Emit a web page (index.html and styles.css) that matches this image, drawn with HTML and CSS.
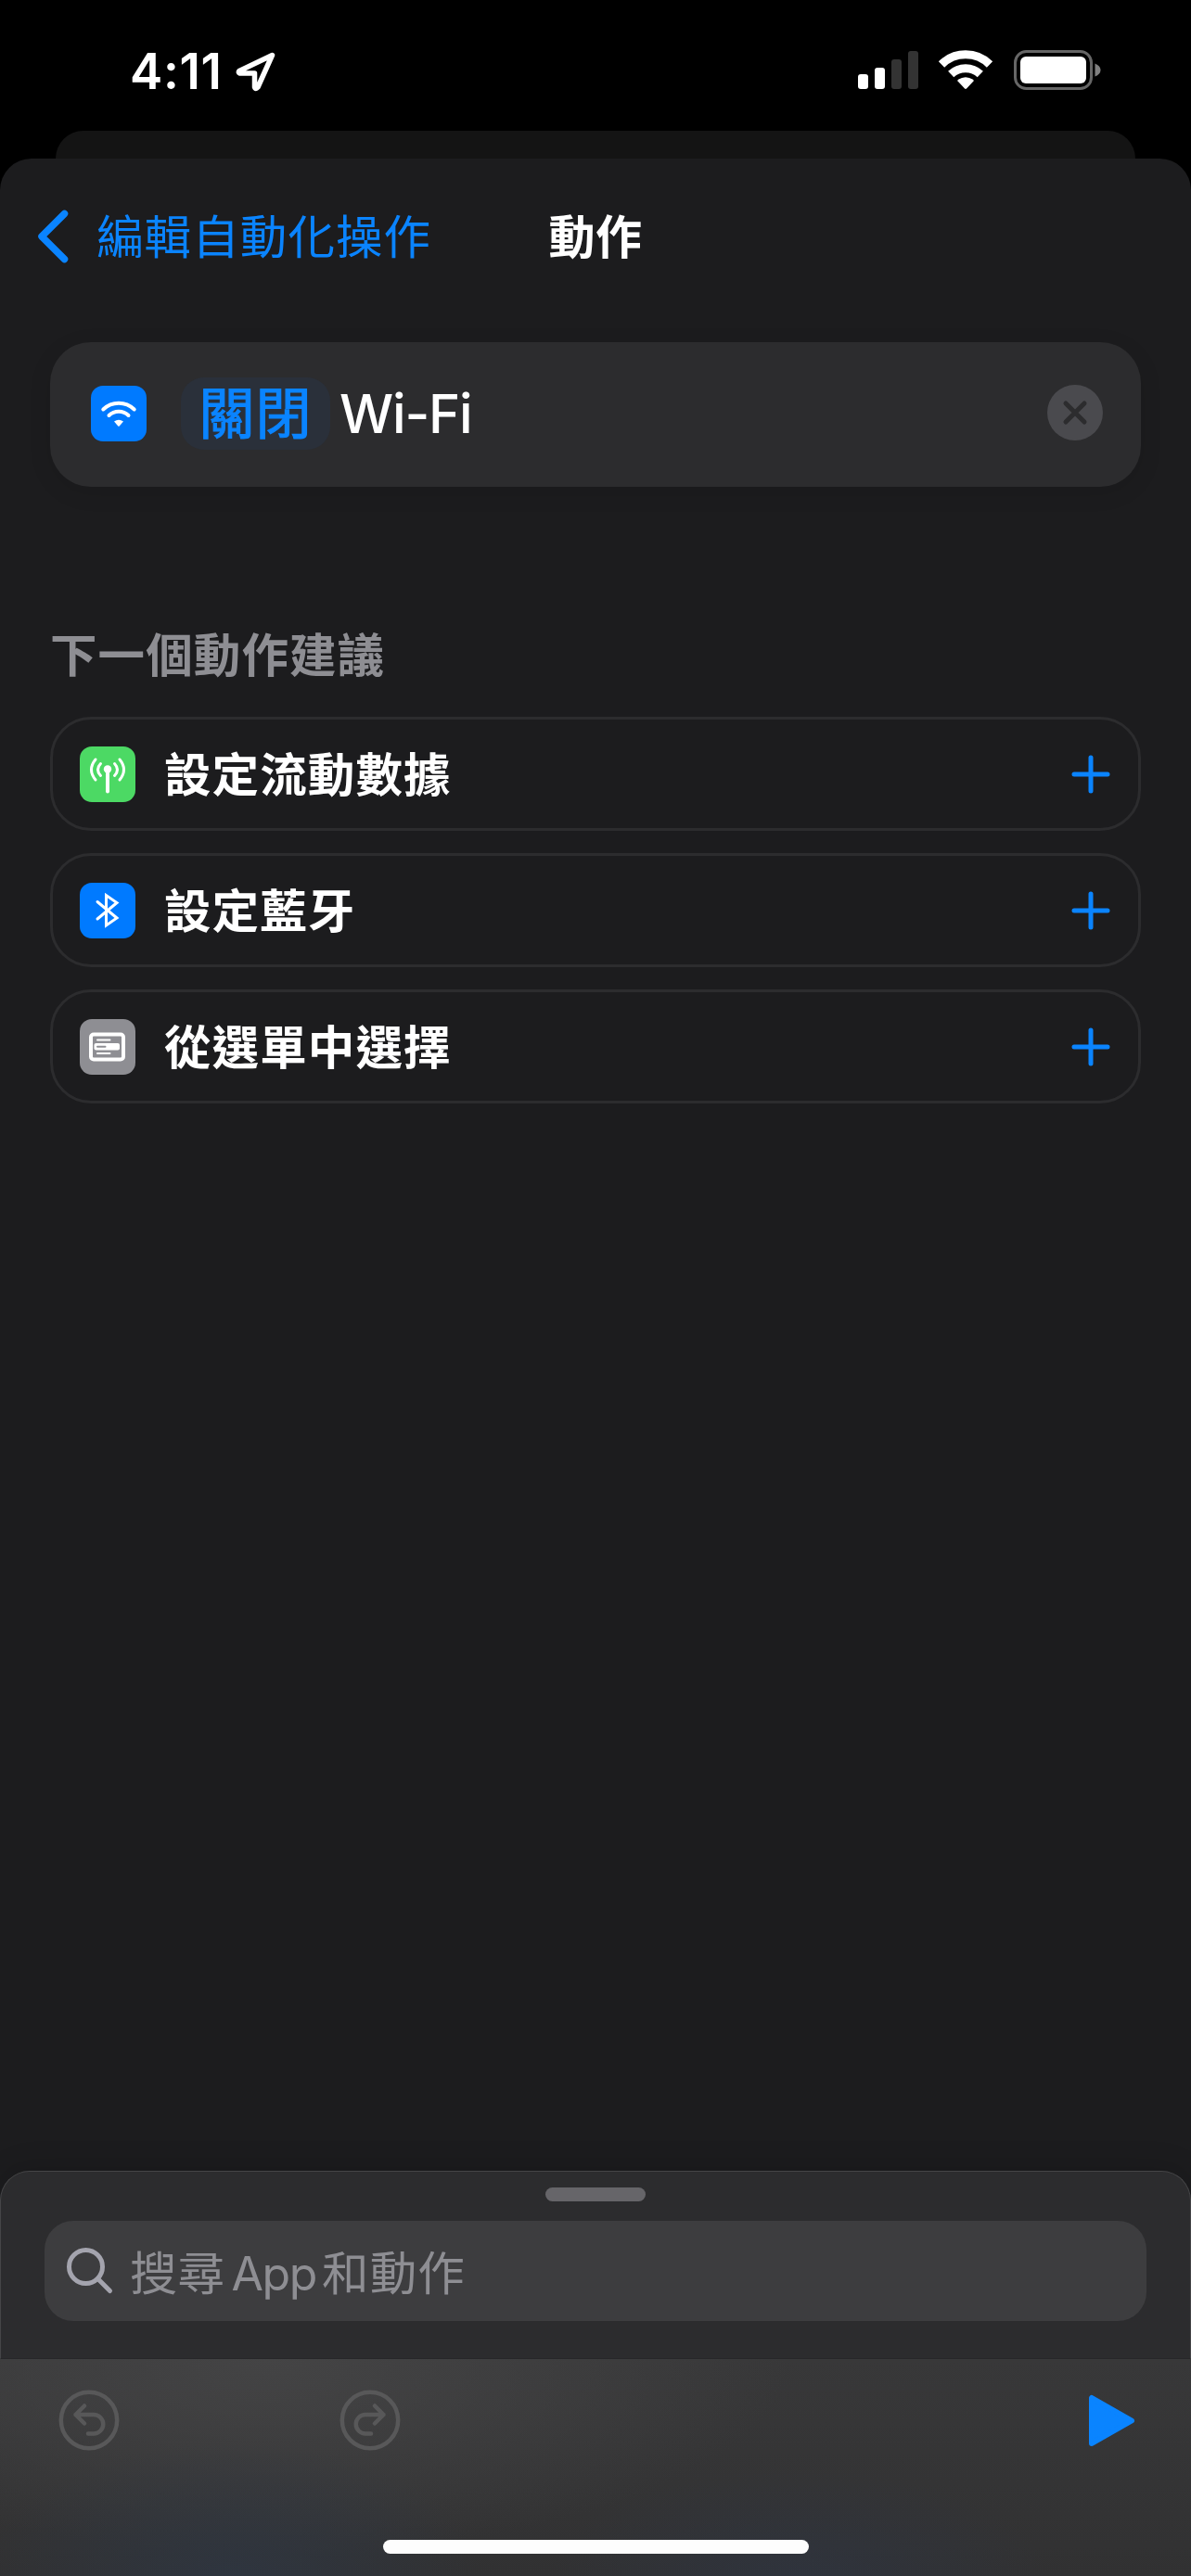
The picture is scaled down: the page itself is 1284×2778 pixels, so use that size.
FILE: index.html
```html
<!DOCTYPE html>
<html lang="zh-Hant-HK">
<head>
<meta charset="utf-8">
<title>動作</title>
<link rel="stylesheet" href="styles.css">
</head>
<body>
<div class="phone">
  <header class="status">
    <div class="status-left">
      <span class="time">4:11</span>
      <svg class="location" viewBox="0 0 42 42"><path d="M38.5 3.5 3 20.500q-1.500 1.500.500 2.500H19.500V38q1 3 3.500 0Z"/></svg>
    </div>
    <div class="status-right">
      <svg class="signal" viewBox="0 0 65 41"><rect y="25" width="11" height="16" rx="3"/><rect x="18" y="18" width="11" height="23" rx="3"/><rect class="dim" x="36" y="9" width="11" height="32" rx="3"/><rect class="dim" x="54" width="11" height="41" rx="3"/></svg>
      <svg class="wifi" viewBox="0 0 58 42"><path d="M3 15.500A37 37 0 0 1 55 15.500" class="arc"/><path d="M13.200 26A23 23 0 0 1 44.800 26" class="arc"/><path d="M20.500 33.500Q20 32.500 21 31.800 29 26.500 37 31.800 38 32.500 37.500 33.500L30 41.500Q29 42.300 28 41.500Z"/></svg>
      <svg class="battery" viewBox="0 0 94 43"><rect class="shell" x="1.500" y="1.500" width="82" height="40" rx="12"/><rect x="7" y="7" width="71" height="29" rx="6"/><path class="nub" d="M87.500 14.500Q93.500 17 93.500 21.500T87.500 28.500Z"/></svg>
    </div>
  </header>
  <div class="sheet-behind"></div>
  <main class="sheet">
    <nav class="nav">
      <a class="back"><svg viewBox="0 0 34 58"><path d="M29.500 4.500 5 29 29.500 53.500"/></svg><span>編輯自動化操作</span></a>
      <h1>動作</h1>
    </nav>
    <section class="action">
      <svg class="tile blue" viewBox="0 0 60 60"><path class="s4" d="M13.300 25.500A24 24 0 0 1 46.700 25.500M19.500 32A15.200 15.200 0 0 1 40.500 32"/><path class="fill" d="M25 38.600Q30 34.800 35 38.600L30.700 43.500Q30 44 29.300 43.500Z"/></svg>
      <span class="pill">關閉</span>
      <span class="object">Wi-Fi</span>
      <svg class="close" viewBox="0 0 60 60"><circle cx="30" cy="30" r="30"/><path d="M20 20 40 40M40 20 20 40"/></svg>
    </section>
    <section class="suggestions">
      <h2>下一個動作建議</h2>
      <ul>
        <li>
          <svg class="tile green" viewBox="0 0 60 60"><path class="s3" d="M17 14Q8 25 17 36M22.500 18.500Q16.500 25 22.500 31.500M37.500 18.500Q43.500 25 37.500 31.500M43 14Q52 25 43 36"/><path class="s4" d="M30 25V48.500"/><circle class="fill" cx="30" cy="24.500" r="4.200"/></svg>
          <span>設定流動數據</span>
          <svg class="plus" viewBox="0 0 42 42"><path d="M21 3V39M3 21H39"/></svg>
        </li>
        <li>
          <svg class="tile blue" viewBox="0 0 60 60"><path class="s3 sharp" d="M19 20.500 40 38 28.500 46V13.500L40 21.500 19 39"/></svg>
          <span>設定藍牙</span>
          <svg class="plus" viewBox="0 0 42 42"><path d="M21 3V39M3 21H39"/></svg>
        </li>
        <li>
          <svg class="tile gray" viewBox="0 0 60 60"><rect class="s4" x="12" y="16.500" width="35" height="27" rx="3"/><rect class="fill" x="15.500" y="26" width="27.500" height="7.500" rx="2"/><path class="s2" d="M19 22.500H32.500M19 37H32.500"/><path class="s2 cut" d="M19 29.800H27.500"/></svg>
          <span>從選單中選擇</span>
          <svg class="plus" viewBox="0 0 42 42"><path d="M21 3V39M3 21H39"/></svg>
        </li>
      </ul>
    </section>
  </main>
  <section class="drawer">
    <div class="grabber"></div>
    <div class="search">
      <svg viewBox="0 0 50 50"><circle cx="20.500" cy="20.500" r="18"/><path d="M33.500 33.500 46.500 46.500"/></svg>
      <span>搜尋 <b>App</b> 和動作</span>
    </div>
  </section>
  <footer class="toolbar">
    <div class="tools">
      <svg class="round" viewBox="0 0 66 66"><circle cx="33" cy="33" r="30.200"/><path d="M28 17.500 18.500 27 28 36.500M18.500 27H38A10 10 0 0 1 38 47.500H32"/></svg>
      <svg class="round" viewBox="0 0 66 66"><circle cx="33" cy="33" r="30.200"/><path d="M38 17.500 47.500 27 38 36.500M47.500 27H28A10 10 0 0 0 28 47.500H34"/></svg>
      <svg class="play" viewBox="0 0 49 55"><path d="M3 3V52L46 27.500Z"/></svg>
    </div>
    <div class="home"></div>
  </footer>
</div>
</body>
</html>
```

FILE: styles.css
```css
* { box-sizing: border-box; }
body { margin: 0; background: #000; }
h1, h2, ul { margin: 0; padding: 0; list-style: none; }
svg { display: block; flex: none; overflow: visible; }

.phone {
  width: 1284px;
  height: 2778px;
  display: flex;
  flex-direction: column;
  overflow: hidden;
  background: #000;
  color: #fff;
  font-family: Inter, "Noto Sans CJK TC", sans-serif;
  font-size: 50.5px;
  letter-spacing: 1.1px;
}

.status {
  height: 141px;
  padding: 54px 97px 0 140px;
  display: flex;
  justify-content: space-between;
  fill: #fff;
}
.status-left { display: flex; gap: 18px; }
.time { font-size: 53px; font-weight: 600; line-height: 46px; letter-spacing: 0.6px; width: 97px; white-space: nowrap; }
.location { width: 42px; height: 42px; margin-top: 2px; fill: none; stroke: #fff; stroke-width: 5.5; stroke-linejoin: round; }
.status-right { display: flex; }
.signal { width: 65px; height: 41px; margin: 1px 22px 0 0; }
.dim { fill: #333; }
.wifi { width: 58px; height: 42px; margin-right: 23px; }
.arc { fill: none; stroke: #fff; stroke-width: 9; }
.battery { width: 94px; height: 43px; }
.shell { fill: none; stroke: #666; stroke-width: 3; }
.nub { fill: #808080; }

.sheet-behind { height: 30px; margin: 0 60px; border-radius: 30px 30px 0 0; background: #141414; flex: none; }
.sheet { flex: 1; border-radius: 34px 34px 0 0; background: #1c1c1e; }

.nav {
  height: 168px;
  padding: 0 40px;
  display: grid;
  grid-template-columns: 1fr auto 1fr;
  align-items: center;
  line-height: 74px;
}
.back { display: flex; align-items: center; gap: 30px; color: #0a84ff; white-space: nowrap; }
.back svg { width: 34px; height: 58px; fill: none; stroke: #0a84ff; stroke-width: 7.5; stroke-linecap: round; stroke-linejoin: round; }
.back span, h1 { padding-top: 1px; }
h1 { font-size: 50px; font-weight: 600; letter-spacing: 0.5px; }

.action {
  height: 156px;
  margin: 30px 54px 0;
  padding: 0 41px 2px 44px;
  display: flex;
  align-items: center;
  border-radius: 44px;
  background: #2c2c2e;
  box-shadow: 0 6px 24px rgba(0, 0, 0, .1);
  font-size: 60px;
}
.tile { width: 60px; height: 60px; border-radius: 13px; fill: none; stroke: #fff; stroke-linecap: round; stroke-linejoin: round; }
.blue { background: #007aff; }
.green { background: #4cd964; }
.gray { background: #8e8e93; }
.fill { fill: #fff; stroke: none; }
.s2 { stroke-width: 2; }
.s3 { stroke-width: 3; }
.s4 { stroke-width: 4; }
.sharp { stroke-linejoin: miter; }
.cut { stroke: #8e8e93; }
.pill { margin-left: 37px; width: 161px; height: 78px; line-height: 78px; text-align: center; border-radius: 25px; background: #2a303a; color: #0a84ff; -webkit-text-stroke: 1.2px #0a84ff; }
.object { margin-left: 10px; font-size: 58px; font-weight: 500; letter-spacing: -1.2px; }
.close { width: 60px; height: 60px; margin: -2px 0 0 auto; stroke: #2c2c2e; stroke-width: 5; stroke-linecap: round; }
.close circle { fill: #4a4a4e; stroke: none; }

.suggestions { margin: 145px 54px 0; }
h2 { height: 103px; font-size: 50.5px; font-weight: 600; line-height: 74px; color: #8e8e93; }
ul { display: grid; gap: 24px; }
li { height: 123px; padding: 0 30px 0 29px; display: flex; align-items: center; border: 3px solid #2c2c2e; border-radius: 44px; font-weight: 600; }
li span { margin-left: 31px; padding-bottom: 5px; flex: 1; }
.plus { width: 42px; height: 42px; stroke: #0a84ff; stroke-width: 5; stroke-linecap: round; }

/* The drawer's rounded corners sit over the end of the sheet. */
.drawer { position: relative; height: 203px; margin-top: -40px; padding: 17px 47px 0; border: 1px solid #454547; border-bottom-color: #262628; border-radius: 32px 32px 0 0; background: #2c2c2e; box-shadow: 0 -4px 30px rgba(0, 0, 0, .15); }
.sheet { margin-bottom: 0; }
.drawer, .toolbar { flex: none; }
.grabber { width: 108px; height: 15px; margin: 0 auto 21px; border-radius: 7.5px; background: #666569; }
.search { height: 108px; padding-left: 24px; display: flex; align-items: center; gap: 18px; border-radius: 31px; background: #3d3d3f; color: #8e8e93; }
.search svg { width: 50px; height: 50px; fill: none; stroke: #a4a4ae; stroke-width: 5; stroke-linecap: round; }
.search b { font-size: 50px; font-weight: 400; letter-spacing: -1.5px; }
.search span { padding-bottom: 3px; word-spacing: -9px; }

.toolbar {
  position: relative;
  height: 234px;
  background:
    radial-gradient(ellipse 270px 150px at 250px 240px, rgba(46, 54, 66, .85), transparent),
    radial-gradient(ellipse 270px 120px at 860px 240px, rgba(46, 52, 64, .8), transparent),
    radial-gradient(ellipse 560px 210px at 290px 0, #444445, transparent),
    linear-gradient(#383839, #313132);
}
.tools { height: 195px; padding: 33px 61px 0 63px; display: flex; align-items: flex-start; }
.round { width: 66px; height: 66px; margin-right: 237px; fill: none; stroke: #585859; stroke-width: 4.5; stroke-linecap: round; stroke-linejoin: round; }
.play { width: 49px; height: 55px; margin: 6px 0 0 auto; fill: #0a84ff; stroke: #0a84ff; stroke-width: 6; stroke-linejoin: round; }
.home { width: 459px; height: 15px; margin: 0 auto; border-radius: 8px; background: #fdfdfd; }
```
